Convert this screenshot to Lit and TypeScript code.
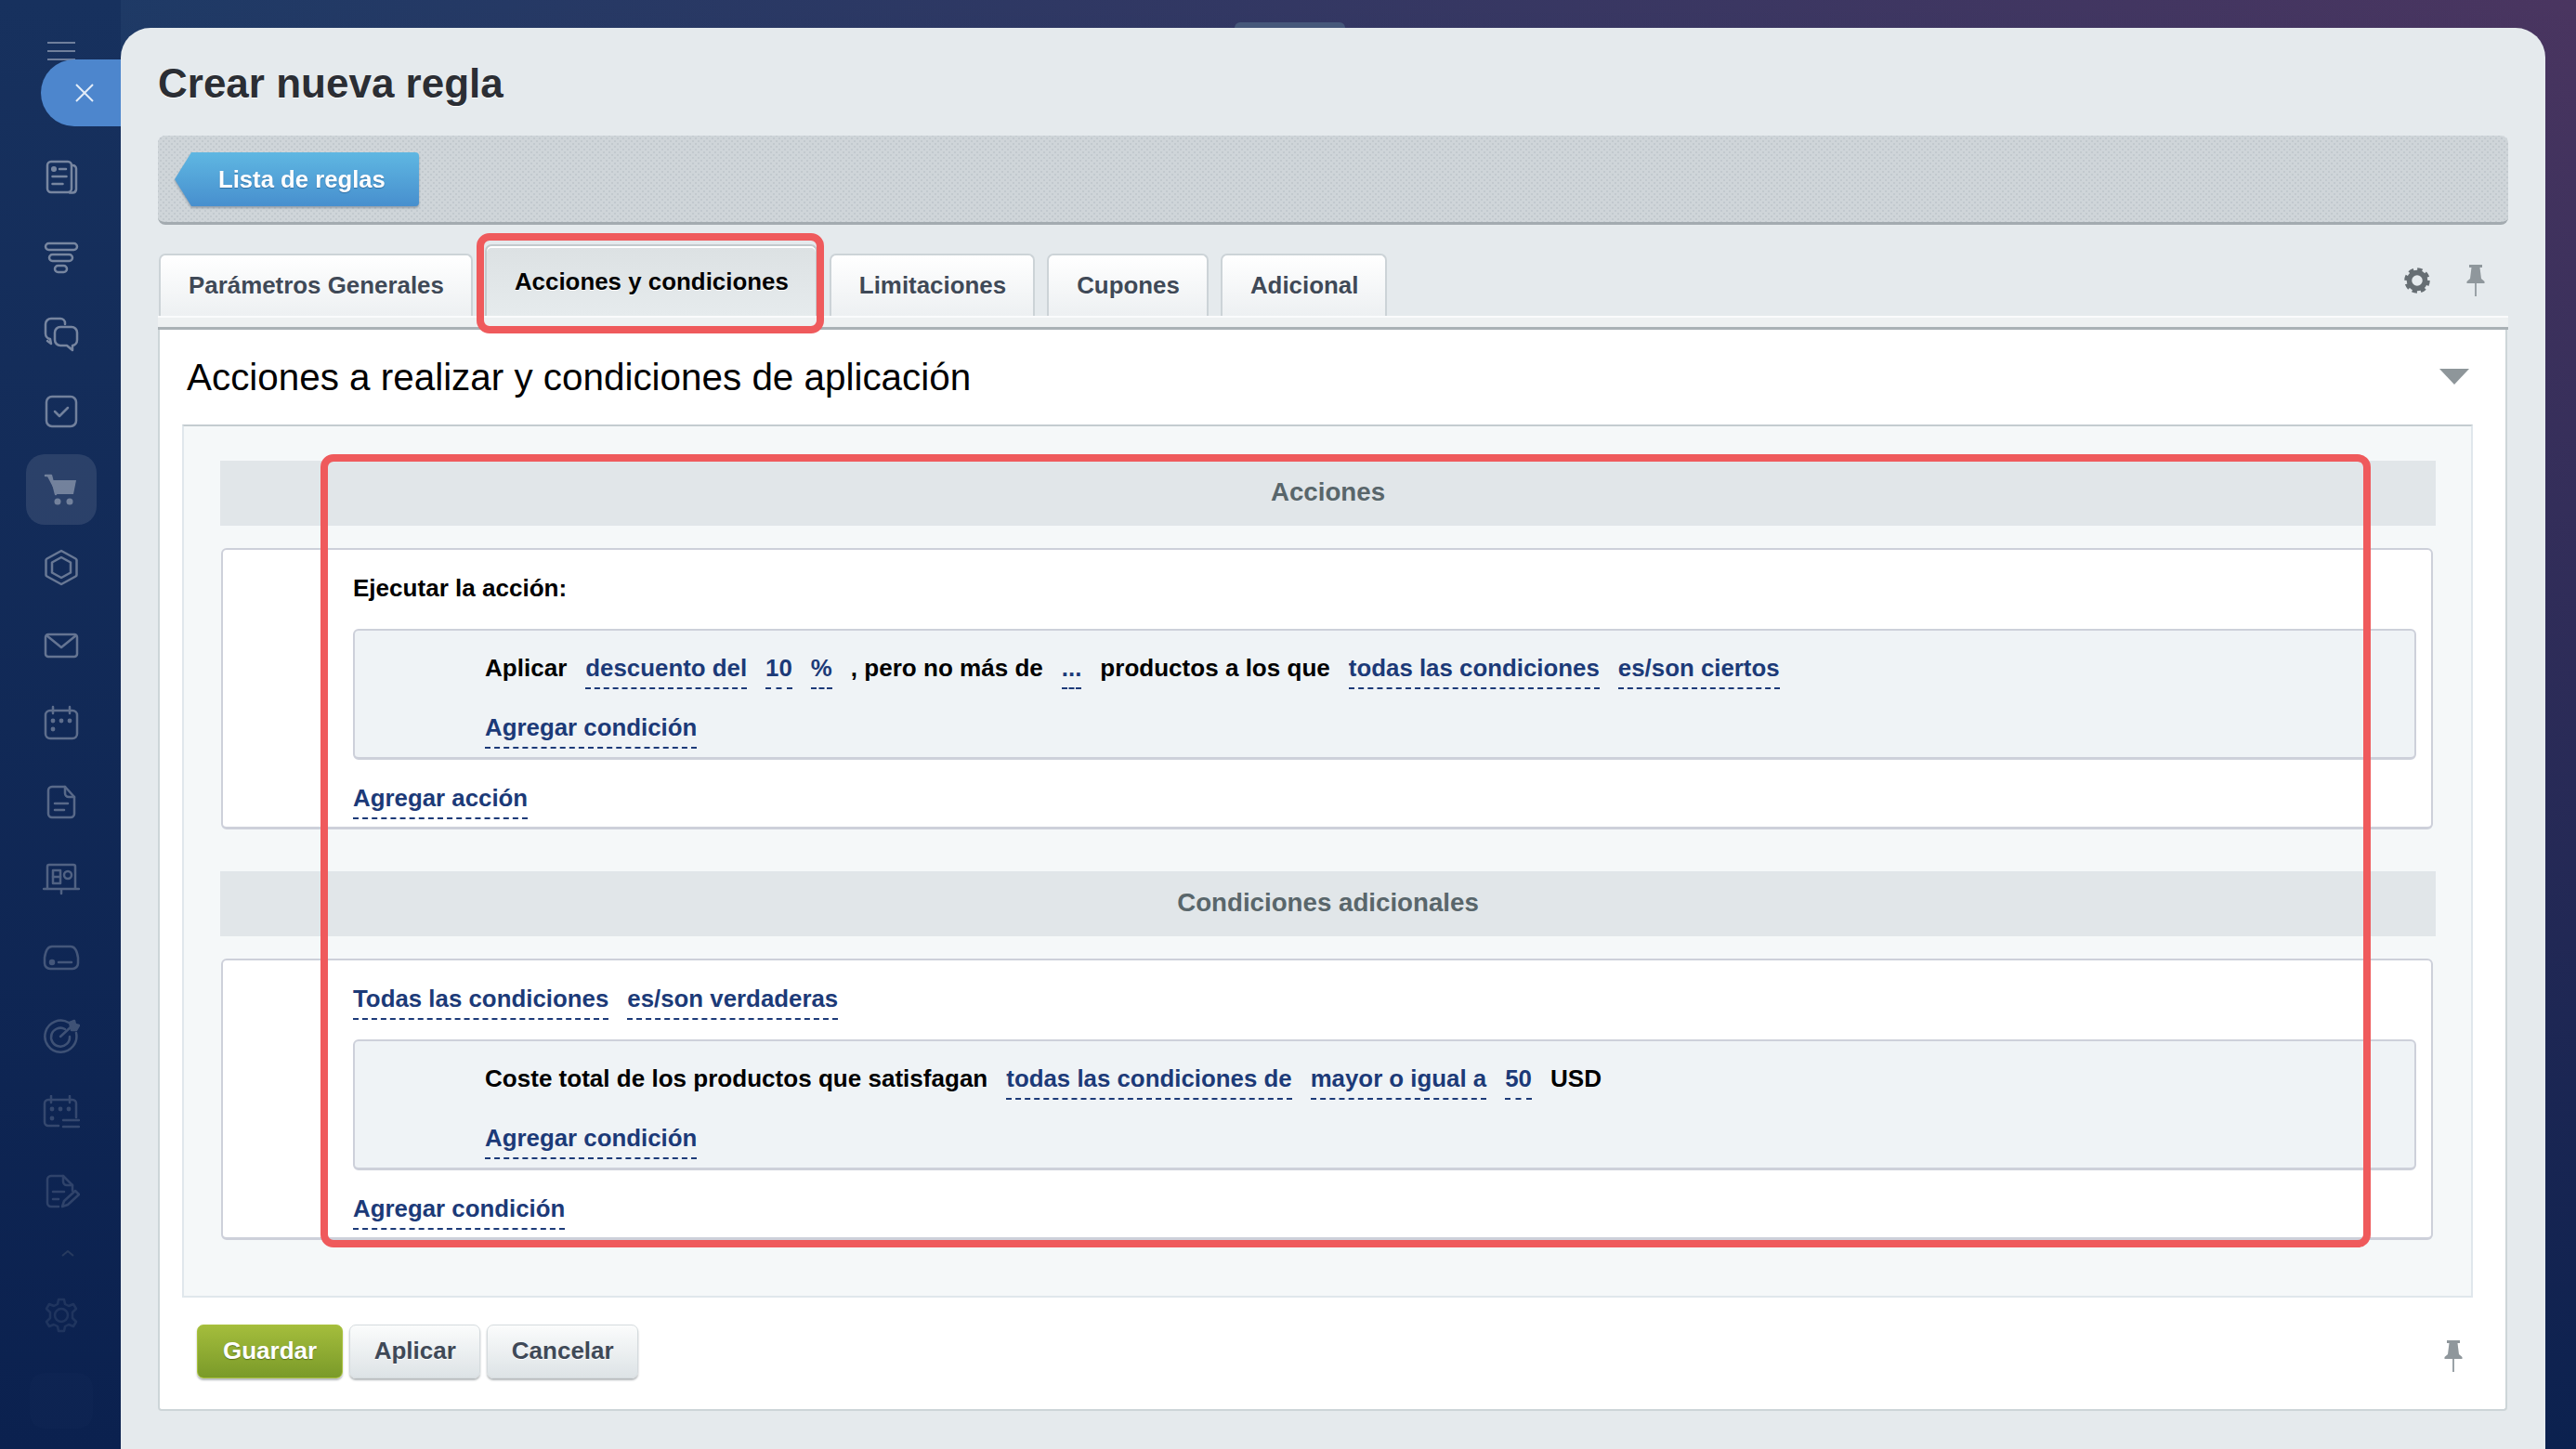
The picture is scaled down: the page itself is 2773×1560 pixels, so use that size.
import { LitElement, html, css, svg } from "lit";
import { customElement } from "lit/decorators.js";

// left rail icons, all drawn on a 40x40 box with stroke=currentColor
const railIcons = [
  {
    o: 0.42,
    d: svg`<rect x="5" y="3" width="26" height="33" rx="4"/><path d="M31 7h1.500a3.500 3.500 0 0 1 3.500 3.500V33a4 4 0 0 1-4 3.500H29"/><circle cx="12" cy="11" r="1.800" fill="currentColor"/><path d="M18 11h7M10.500 19h15M10.500 27h11"/>`,
  },
  {
    o: 0.42,
    d: svg`<rect x="3" y="7" width="34" height="7" rx="3.500"/><rect x="7" y="19" width="25" height="7" rx="3.500"/><rect x="13" y="31" width="13" height="7" rx="3.500"/>`,
  },
  {
    o: 0.42,
    d: svg`<path d="M24 10v-1a5 5 0 0 0-5-5H9a6 6 0 0 0-6 6v10a6 6 0 0 0 5 6l1 5-4-3"/><path d="M19 13h12a6 6 0 0 1 6 6v8a6 6 0 0 1-5 6v5l-6-5h-7a6 6 0 0 1-6-6v-8a6 6 0 0 1 6-6z"/>`,
  },
  {
    o: 0.4,
    d: svg`<rect x="4" y="4" width="32" height="32" rx="6"/><path d="M13 20l5 5 9-9"/>`,
  },
  {
    o: 0.34,
    d: svg`<path d="M5 6h4.500l1.500 4h25l-3 15H15z" fill="currentColor" stroke="none"/><path d="M3 5h6l5 20" stroke-width="2.500"/><circle cx="16" cy="33" r="3.500" fill="currentColor" stroke="none"/><circle cx="29" cy="33" r="3.500" fill="currentColor" stroke="none"/>`,
  },
  {
    o: 0.36,
    d: svg`<path d="M20 2l15.500 8.500a2 2 0 0 1 1 2v15a2 2 0 0 1-1 2L20 38 4.500 29.500a2 2 0 0 1-1-2v-15a2 2 0 0 1 1-2z"/><path d="M20 9l10 5.500v11L20 31l-10-5.500v-11z"/>`,
  },
  {
    o: 0.35,
    d: svg`<rect x="3" y="8" width="34" height="24" rx="3"/><path d="M4 9l16 13L36 9"/>`,
  },
  {
    o: 0.32,
    d: svg`<rect x="3" y="6" width="34" height="30" rx="5"/><path d="M11 2v7M29 2v7"/><g fill="currentColor" stroke="none"><circle cx="11" cy="17" r="2.400"/><circle cx="20" cy="17" r="2.400"/><circle cx="29" cy="17" r="2.400"/><circle cx="11" cy="26" r="2.400"/></g>`,
  },
  {
    o: 0.3,
    d: svg`<path d="M10 4h14l10 11v18a4 4 0 0 1-4 4H10a4 4 0 0 1-4-4V8a4 4 0 0 1 4-4z"/><path d="M24 4v7a4 4 0 0 0 4 4h6M13 22h14M13 29h10"/>`,
  },
  {
    o: 0.27,
    d: svg`<path d="M5 29V6a2 2 0 0 1 2-2h26a2 2 0 0 1 2 2v23M1 30h38M20 31v4"/><rect x="11" y="10" width="8" height="14"/><path d="M11 17h8"/><circle cx="27" cy="15" r="4"/>`,
  },
  {
    o: 0.22,
    d: svg`<path d="M10 8h20c4 0 7 5 8 12v6a6 6 0 0 1-6 6H8a6 6 0 0 1-6-6v-6C3 13 6 8 10 8z"/><circle cx="10" cy="25" r="2" fill="currentColor"/><path d="M17 25h14"/>`,
  },
  {
    o: 0.2,
    d: svg`<path d="M28 6a17 17 0 1 0 8 11"/><path d="M24 13a10 10 0 1 0 5 8"/><path d="M19 21L31 10"/><path d="M29 6l5-2 1 4 4 1-3 5-5 0z" fill="currentColor"/>`,
  },
  {
    o: 0.16,
    d: svg`<path d="M17 33H6a4 4 0 0 1-4-4V9a4 4 0 0 1 4-4h26a4 4 0 0 1 4 4v15"/><path d="M9 1v7M29 1v7M22 27h17M22 34h17"/><g fill="currentColor" stroke="none"><circle cx="10" cy="15" r="2.400"/><circle cx="19" cy="15" r="2.400"/><circle cx="28" cy="15" r="2.400"/><circle cx="10" cy="25" r="2.400"/></g>`,
  },
  {
    o: 0.14,
    d: svg`<path d="M17 36H9a4 4 0 0 1-4-4V7a4 4 0 0 1 4-4h13l10 10v6"/><path d="M22 3v6a4 4 0 0 0 4 4h6M11 20h12M11 28h6"/><path d="M21 36l2-6 12-11 4 4-12 11z"/>`,
  },
];

const pin = html`<svg class="pin" width="20" height="34" viewBox="0 0 20 34">
  <path d="M3 0h14v3h-2.500l1.500 12 3.500 3v2H.5v-2L4 15 5.500 3H3z" fill="#8f979c" />
  <rect x="9" y="20" width="2" height="14" fill="#9aa2a7" />
</svg>`;

@customElement("app-root")
export class AppRoot extends LitElement {
  static styles = css`
    :host {
      display: flex;
      position: relative;
      width: 2773px;
      height: 1560px;
      overflow: hidden;
      font-family: "Liberation Sans", Arial, sans-serif;
      background:
        linear-gradient(to bottom, rgba(11, 33, 79, 0) 0%, #0b214f 100%),
        linear-gradient(to right, #1c3a66 0%, #4a3560 100%);
    }

    .rail {
      position: relative;
      flex: none;
      width: 130px;
      height: 100%;
      box-sizing: border-box;
      padding: 45px 0 0 2px;
      display: flex;
      flex-direction: column;
      align-items: center;
      background: linear-gradient(to bottom, #17315e, #0b214f);
      color: #fff;
    }
    .burger {
      width: 30px;
      height: 20px;
      margin-bottom: 84px;
      display: flex;
      flex-direction: column;
      justify-content: space-between;
    }
    .burger i {
      display: block;
      height: 2px;
      background: #6f7f9c;
    }
    .rail-item {
      position: relative;
      flex: none;
      width: 76px;
      height: 84px;
      display: flex;
      align-items: center;
      justify-content: center;
    }
    .rail-item svg {
      fill: none;
      stroke: currentColor;
      stroke-width: 2.500;
      stroke-linecap: round;
      stroke-linejoin: round;
    }
    .rail-item.active::before {
      content: "";
      position: absolute;
      inset: 4px 0;
      border-radius: 20px;
      background: rgba(255, 255, 255, 0.1);
    }
    .rail-fold {
      flex: none;
      height: 28px;
      margin-bottom: 21px;
      display: flex;
      align-items: flex-end;
      padding-left: 14px;
    }
    .rail-fold svg {
      stroke: #283b5f;
      fill: none;
      stroke-width: 2;
    }
    .rail-tile {
      position: absolute;
      left: 32px;
      top: 1478px;
      width: 68px;
      height: 60px;
      border-radius: 16px;
      background: rgba(255, 255, 255, 0.012);
    }

    .close {
      position: absolute;
      left: 44px;
      top: 64px;
      width: 86px;
      height: 72px;
      padding-left: 8px;
      box-sizing: border-box;
      border-radius: 36px 0 0 36px;
      background: #4d86cd;
      display: flex;
      align-items: center;
      justify-content: center;
    }

    .peek {
      position: absolute;
      left: 1329px;
      top: 24px;
      width: 119px;
      height: 6px;
      border-radius: 10px 10px 0 0;
      background: #46587a;
    }

    .panel {
      position: relative;
      flex: none;
      width: 2610px;
      height: 1530px;
      margin-top: 30px;
      box-sizing: border-box;
      padding: 0 40px;
      border-radius: 32px 32px 0 0;
      background: #e5eaed;
    }

    h1 {
      margin: 0;
      height: 116px;
      box-sizing: border-box;
      padding: 36px 0 0 0;
      font-size: 44px;
      line-height: 48px;
      font-weight: 700;
      color: #2b2e34;
      text-shadow: 0 1px 0 #fff;
    }

    .bar {
      height: 96px;
      box-sizing: border-box;
      padding: 18px 0 0 18px;
      border-radius: 8px;
      border-bottom: 3px solid #a3abb0;
      background-color: #cfd5d9;
      background-image:
        radial-gradient(#c2c9ce 1px, transparent 1.200px),
        radial-gradient(#c2c9ce 1px, transparent 1.200px);
      background-size: 6px 6px;
      background-position: 0 0, 3px 3px;
    }
    .back-wrap {
      width: 263px;
      filter: drop-shadow(0 2px 1px rgba(60, 80, 100, 0.4));
    }
    .back {
      display: flex;
      align-items: center;
      height: 58px;
      box-sizing: border-box;
      padding-left: 47px;
      color: #fff;
      font-size: 25.700px;
      font-weight: 700;
      text-shadow: 0 1px 1px rgba(30, 80, 130, 0.6);
      background: linear-gradient(to bottom, #5fb7e2, #478fce);
      clip-path: path("M18 0H259a4 4 0 0 1 4 4V54a4 4 0 0 1-4 4H18L0 29z");
    }

    .tabs {
      display: flex;
      align-items: flex-end;
      gap: 13px;
      height: 77px;
      margin-top: 21px;
      padding-left: 1px;
    }
    .tab {
      height: 67px;
      box-sizing: border-box;
      padding: 0 29px 0 30px;
      display: flex;
      align-items: center;
      border: 2px solid #ccd3d7;
      border-bottom: 0;
      border-radius: 7px 7px 0 0;
      background: linear-gradient(to bottom, #fff, #edf0f2);
      color: #3f4957;
      font-size: 25.900px;
      font-weight: 700;
      text-shadow: 0 1px 0 #fff;
    }
    .tab.on {
      height: 77px;
      padding: 2px 29px 0 30px;
      border-color: #c3cacd;
      box-shadow: inset 0 2px 0 #fff;
      background: linear-gradient(to bottom, #dce1e3, #e6ebed);
      color: #000;
    }
    .tab-tools {
      margin-left: auto;
      display: flex;
      align-items: center;
      gap: 39px;
      padding: 0 25px 14px 0;
      height: 63px;
      box-sizing: border-box;
    }

    .strip {
      height: 15px;
      box-sizing: border-box;
      border-top: 2px solid #fafbfc;
      border-bottom: 3px solid #a9b1b5;
      background: #eef1f2;
    }

    .content {
      width: 2529px;
      box-sizing: border-box;
      background: #fff;
      border: 2px solid #cdd5d8;
      border-top: 0;
      border-radius: 0 0 4px 4px;
    }
    .head {
      height: 102px;
      box-sizing: border-box;
      padding: 0 39px 0 29px;
      display: flex;
      align-items: center;
      justify-content: space-between;
    }
    h2 {
      margin: 0;
      font-size: 40.400px;
      font-weight: 400;
      color: #000;
    }
    .tri {
      width: 0;
      height: 0;
      margin-top: -2px;
      border-style: solid;
      border-width: 17px 16px 0;
      border-color: #8e969a transparent transparent;
    }

    .inner {
      margin: 0 35px 0 24px;
      box-sizing: border-box;
      height: 940px;
      padding: 37px 38px 0 39px;
      background: #f5f8f9;
      border: 2px solid #e0e7ec;
      border-top: 2px solid #c4ccd0;
    }
    .group-title {
      height: 70px;
      box-sizing: border-box;
      padding-bottom: 2px;
      display: flex;
      align-items: center;
      justify-content: center;
      background: #e1e6e9;
      color: #59666b;
      font-size: 27.700px;
      font-weight: 700;
    }
    .card {
      margin: 24px 3px 45px 1px;
      height: 303px;
      box-sizing: border-box;
      padding: 25px 16px 0 140px;
      background: #fff;
      border: 2px solid #cdd0da;
      border-bottom-width: 3px;
      border-radius: 6px;
    }
    .line {
      height: 40px;
      display: flex;
      align-items: baseline;
      gap: 20px;
      font-size: 26.050px;
      line-height: 32px;
      font-weight: 700;
      color: #000;
    }
    .rule {
      height: 141px;
      margin: 20px 0 25px;
      box-sizing: border-box;
      padding: 24px 0 0 140px;
      background: #eff3f6;
      border: 2px solid #cdd0da;
      border-bottom-width: 3px;
      border-radius: 6px;
    }
    .rule .line + .line {
      margin-top: 24px;
    }
    .lk {
      color: #1c3a78;
      font-size: 25.850px;
      border-bottom: 2px dashed #1c3a78;
      padding-bottom: 5px;
    }

    .footer {
      height: 120px;
      box-sizing: border-box;
      padding: 29px 46px 0 40px;
      display: flex;
      align-items: flex-start;
      gap: 7px;
    }
    .btn {
      height: 58px;
      box-sizing: border-box;
      padding: 0 25.500px 2px;
      display: flex;
      align-items: center;
      border-radius: 7px;
      border: 1px solid #d5dbde;
      background: linear-gradient(to bottom, #fbfcfc, #dde3e6);
      box-shadow: 0 2px 2px rgba(90, 100, 105, 0.45);
      color: #3f4957;
      font-size: 26px;
      font-weight: 700;
      text-shadow: 0 1px 0 #fff;
    }
    .btn.save {
      padding: 0 27px 2px;
      border-color: #a9c13d;
      background: linear-gradient(to bottom, #a4bd3c, #7a9a29);
      color: #fff;
      text-shadow: 0 1px 1px rgba(60, 80, 10, 0.6);
    }
    .footer .pin {
      margin: 17px 0 0 auto;
    }

    .mark {
      position: absolute;
      box-sizing: border-box;
      border: 8px solid #ef5a5c;
      border-radius: 14px;
      pointer-events: none;
    }
    .mark.tab-mark {
      left: 383px;
      top: 221px;
      width: 374px;
      height: 108px;
    }
    .mark.main-mark {
      left: 215px;
      top: 459px;
      width: 2207px;
      height: 854px;
    }
  `;

  renderRail() {
    return html`<nav class="rail">
      <div class="burger"><i></i><i></i><i></i></div>
      ${railIcons.map(
        (ic, i) => html`<div class="rail-item ${i === 4 ? "active" : ""}">
          <svg width="40" height="40" viewBox="0 0 40 40" style="opacity:${ic.o}">${ic.d}</svg>
        </div>`,
      )}
      <div class="rail-fold">
        <svg width="16" height="8" viewBox="0 0 16 8"><path d="M2 7l6-5 6 5" /></svg>
      </div>
      <div class="rail-item">
        <svg width="40" height="40" viewBox="0 0 40 40" style="opacity:.08">
          <circle cx="20" cy="20" r="7" />
          <path
            d="M17 3h6l1 5 4 2 5-2 3 5-4 4v6l4 4-3 5-5-2-4 2-1 5h-6l-1-5-4-2-5 2-3-5 4-4v-6l-4-4 3-5 5 2 4-2z"
          />
        </svg>
      </div>
      <div class="rail-tile"></div>
    </nav>`;
  }

  renderCard(lead: unknown, ruleRow: unknown, addLabel: string) {
    return html`<div class="card">
      <div class="line">${lead}</div>
      <div class="rule">
        <div class="line">${ruleRow}</div>
        <div class="line"><span class="lk">Agregar condición</span></div>
      </div>
      <div class="line"><span class="lk">${addLabel}</span></div>
    </div>`;
  }

  render() {
    return html`
      ${this.renderRail()}
      <div class="peek"></div>
      <div class="close">
        <svg width="20" height="20" viewBox="0 0 20 20" fill="none" stroke="#e4edf8" stroke-width="2">
          <path d="M1 1l18 18M19 1L1 19" />
        </svg>
      </div>
      <main class="panel">
        <h1>Crear nueva regla</h1>
        <div class="bar">
          <div class="back-wrap"><div class="back">Lista de reglas</div></div>
        </div>
        <div class="tabs">
          <div class="tab">Parámetros Generales</div>
          <div class="tab on">Acciones y condiciones</div>
          <div class="tab">Limitaciones</div>
          <div class="tab">Cupones</div>
          <div class="tab">Adicional</div>
          <div class="tab-tools">
            <svg width="28" height="28" viewBox="0 0 28 28" fill="none">
              <circle cx="14" cy="14" r="8.500" stroke="#666e73" stroke-width="5.500" />
              <circle cx="14" cy="14" r="12" stroke="#666e73" stroke-width="3.500" stroke-dasharray="5.400 4" />
            </svg>
            ${pin}
          </div>
        </div>
        <div class="strip"></div>
        <section class="content">
          <div class="head">
            <h2>Acciones a realizar y condiciones de aplicación</h2>
            <div class="tri"></div>
          </div>
          <div class="inner">
            <div class="group-title">Acciones</div>
            ${this.renderCard(
              html`Ejecutar la acción:`,
              html`<span>Aplicar</span>
                <span class="lk">descuento del</span>
                <span class="lk">10</span>
                <span class="lk">%</span>
                <span>, pero no más de</span>
                <span class="lk">...</span>
                <span>productos a los que</span>
                <span class="lk">todas las condiciones</span>
                <span class="lk">es/son ciertos</span>`,
              "Agregar acción",
            )}
            <div class="group-title">Condiciones adicionales</div>
            ${this.renderCard(
              html`<span class="lk">Todas las condiciones</span>
                <span class="lk">es/son verdaderas</span>`,
              html`<span>Coste total de los productos que satisfagan</span>
                <span class="lk">todas las condiciones de</span>
                <span class="lk">mayor o igual a</span>
                <span class="lk">50</span>
                <span>USD</span>`,
              "Agregar condición",
            )}
          </div>
          <div class="footer">
            <div class="btn save">Guardar</div>
            <div class="btn">Aplicar</div>
            <div class="btn">Cancelar</div>
            ${pin}
          </div>
        </section>
        <div class="mark tab-mark"></div>
        <div class="mark main-mark"></div>
      </main>
    `;
  }
}
